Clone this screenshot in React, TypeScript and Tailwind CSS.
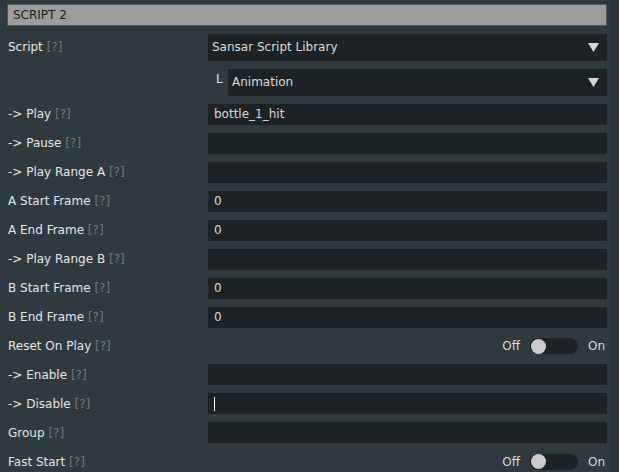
import React from "react";

const font = { fontFamily: '"DejaVu Sans", "Liberation Sans", sans-serif' };

function Label({ text }: { text: string }) {
  return (
    <div className="w-[208px] shrink-0 pl-2 text-[12px] text-[#e4e6e7] whitespace-pre">
      {text} <span className="text-[#707a80]">[?]</span>
    </div>
  );
}

function Arrow() {
  return (
    <svg width="11" height="9" viewBox="0 0 11 9" className="shrink-0">
      <path d="M0 0 H11 L5.5 9 Z" fill="#d4d6d7" />
    </svg>
  );
}

function InputRow({ label, value, cursor }: { label: string; value?: string; cursor?: boolean }) {
  return (
    <div className="flex items-center h-[21px]">
      <Label text={label} />
      <div className="flex-1 h-[21px] bg-[#1d2226] flex items-center pl-[6px] text-[12px] text-[#d8dadb]">
        {value}
        {cursor && <div className="w-px h-[14px] bg-white" />}
      </div>
    </div>
  );
}

function ToggleRow({ label }: { label: string }) {
  return (
    <div className="flex items-center h-[21px]">
      <Label text={label} />
      <div className="flex-1 flex items-center justify-end gap-[10px] text-[12px] text-[#d8dadb] pr-[2px]">
        <span>Off</span>
        <div className="w-[48px] h-[16px] rounded-full bg-[#1d2226] flex items-center pl-px">
          <div className="w-[15px] h-[15px] rounded-full bg-[#cbcbcb]" />
        </div>
        <span>On</span>
      </div>
    </div>
  );
}

export default function App() {
  return (
    <div className="w-[619px] h-[472px] bg-[#2e3940] flex overflow-hidden" style={font}>
      <div className="flex-1 flex flex-col gap-2 pt-1 pr-0">
        <div className="ml-[7px] h-[22px] bg-[#9c9c9c] border border-[#4e585d] flex items-center pl-[5px] text-[12px] text-[#1a1c1d]">
          SCRIPT 2
        </div>
        <div className="flex items-center h-[27px]">
          <Label text="Script" />
          <div className="flex-1 h-[27px] bg-[#1d2226] flex items-center justify-between pl-[4px] pr-[8px] text-[12px] text-[#d8dadb]">
            <span>Sansar Script Library</span>
            <Arrow />
          </div>
        </div>
        <div className="flex items-center h-[27px]">
          <div className="w-[208px] shrink-0" />
          <div className="w-[20px] shrink-0 self-start pl-[8px] pt-[1px] text-[12px] text-[#e4e6e7]">L</div>
          <div className="flex-1 h-[27px] bg-[#1d2226] flex items-center justify-between pl-[4px] pr-[8px] text-[12px] text-[#d8dadb]">
            <span>Animation</span>
            <Arrow />
          </div>
        </div>
        <InputRow label="-> Play" value="bottle_1_hit" />
        <InputRow label="-> Pause" />
        <InputRow label="-> Play Range A" />
        <InputRow label="A Start Frame" value="0" />
        <InputRow label="A End Frame" value="0" />
        <InputRow label="-> Play Range B" />
        <InputRow label="B Start Frame" value="0" />
        <InputRow label="B End Frame" value="0" />
        <ToggleRow label="Reset On Play" />
        <InputRow label="-> Enable" />
        <InputRow label="-> Disable" cursor />
        <InputRow label="Group" />
        <ToggleRow label="Fast Start" />
      </div>
      <div className="w-[4px] shrink-0" />
      <div className="w-[8px] shrink-0 bg-[#2a343a]" />
    </div>
  );
}
